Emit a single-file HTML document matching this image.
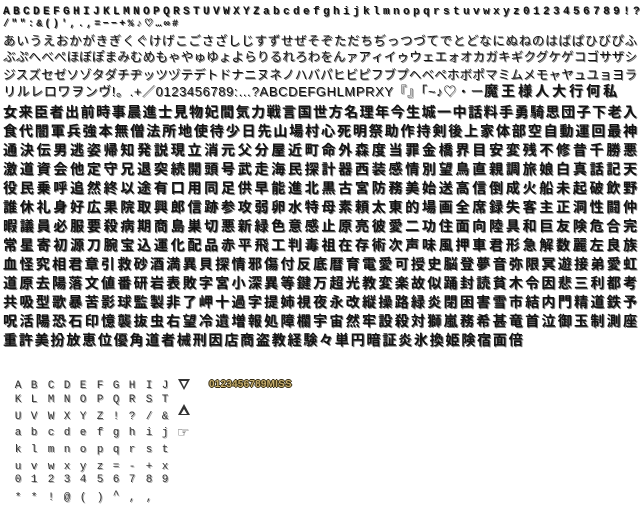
<!DOCTYPE html>
<html><head><meta charset="utf-8"><style>
html,body{margin:0;padding:0;background:#fff;width:640px;height:520px;overflow:hidden;position:relative}
.l{position:absolute;left:3px;width:634px;white-space:nowrap;color:#111;font-family:"Liberation Sans","Noto Sans CJK JP",sans-serif;text-shadow:1px 1px 0 #777;line-height:1}
.j{text-align:justify;text-align-last:justify}
.k{font-size:14px;font-weight:bold;height:15px}
.kn{font-size:12.5px;height:13px}
.m{font-family:"Liberation Mono",monospace;font-weight:bold}
.g{position:absolute;font-family:"Liberation Mono",monospace;font-size:11px;color:#333;text-shadow:1px 1px 0 #aaa;width:10px;text-align:center;line-height:1}
</style></head><body>
<div class="l m" style="top:7px;font-size:11px;letter-spacing:3.4px">ABCDEFGHIJKLMNOPQRSTUVWXYZabcdefghijklmnopqrstuvwxyz0123456789!?</div>
<div class="l m" style="top:20px;font-size:10px;letter-spacing:2.3px;width:auto">/"":&amp;()',.,=−−+%♪♡…∞#</div>
<div class="l kn j" style="top:35px">あいうえおかがきぎくぐけげこごさざしじすずせぜそぞただちぢっつづてでとどなにぬねのはばぱひびぴふ</div>
<div class="l kn j" style="top:51px">ぶぷへべぺほぼぽまみむめもゃやゅゆょよらりるれろわをんァアィイゥウェエォオカガキギクグケゲコゴサザシ</div>
<div class="l kn j" style="top:69px">ジスズセゼソゾタダチヂッツヅテデトドナニヌネノハバパヒビピフブプヘベペホボポマミムメモャヤュユョヨラ</div>
<div class="l kn" style="top:84px;font-size:13px;letter-spacing:0.6px">リルレロワヲンヴ!。.+／0123456789:…?ABCDEFGHLMPRXY『』「~♪♡・ー<span style="letter-spacing:3px;font-weight:bold;font-size:14px">魔王様人大行何私</span></div>
<div class="l k j" style="top:105px">女来臣者出前時事晨進士見物妃間気力戦言国世方名理年今生城一中話料手勇騎思団子下老入</div>
<div class="l k j" style="top:124px">食代闇軍兵強本無僧法所地使待少日先山場村心死明祭助作持剣後上家体部空自動運回最神</div>
<div class="l k j" style="top:143px">通決伝男逃姿帰知発説現立消元父分屋近町命外森度当罪金橋界目安変残不修昔千勝悪</div>
<div class="l k j" style="top:162px">激道資会他定守兄退突続開頭号武走海民探計器西装感情別望鳥直親調旅娘白真話記天</div>
<div class="l k j" style="top:181px">役民乗呼追然終以途有口用同足供早能進北黒古宮防務美始送高信倒成火船未起破飲野</div>
<div class="l k j" style="top:200px">誰休礼身好広果院取興郎信跡参攻弱卵水特母素頼太東的場画全席録失客主正洞性闘仲</div>
<div class="l k j" style="top:219px">暇議員必服要殺病期商島巣切悪新緑色意感止原亮彼愛二功住面向陸具和巨友険危合完</div>
<div class="l k j" style="top:238px">常星寄初源刀腕宝込運化配品赤平飛工判毒祖在存術次声味風押車君形急解数麗左良族</div>
<div class="l k j" style="top:257px">血怪究相君章引救砂酒満異貝探情邪傷付反底暦育電愛可授史脳登夢音弥限冥遊接弟愛虹</div>
<div class="l k j" style="top:276px">道原去陽落文値番研岩表敗字宮小深異等鍵万超光教変楽故似踊封読貧木令因悲三利都考</div>
<div class="l k j" style="top:295px">共吸型歌暴苦影球監製非了岬十過字提姉視夜永改縦操路緑炎閉困害雪市結内門精道鉄予</div>
<div class="l k j" style="top:314px">呪活陽恐石印憶襲抜虫右望冷遺増報処障欄宇宙然牢設殺対獅嵐務希甚竜首泣御玉制測座</div>
<div class="l k" style="top:333px;letter-spacing:1.8px;width:auto">重許美扮放恵位優角道者械刑因店商盗教経験々単円暗証炎氷換姫険宿面倍</div>

<div style="position:absolute;left:178px;top:379px;width:0;height:0;border-left:6px solid transparent;border-right:6px solid transparent;border-top:11px solid #333"></div>
<div style="position:absolute;left:181px;top:381px;width:0;height:0;border-left:3px solid transparent;border-right:3px solid transparent;border-top:6px solid #fff"></div>
<div style="position:absolute;left:178px;top:404px;width:0;height:0;border-left:6px solid transparent;border-right:6px solid transparent;border-bottom:11px solid #333"></div>
<div style="position:absolute;left:181px;top:409px;width:0;height:0;border-left:3px solid transparent;border-right:3px solid transparent;border-bottom:5px solid #fff"></div>
<div style="position:absolute;left:177px;top:426px;font-size:14px;color:#333;line-height:1;font-family:'DejaVu Sans',sans-serif">☞</div>
<div style="position:absolute;left:209px;top:380px;font-family:'Liberation Sans',sans-serif;font-weight:bold;font-size:10px;color:#c8b070;text-shadow:1px 0 0 #332a10,-1px 0 0 #332a10,0 1px 0 #332a10,0 -1px 0 #332a10;letter-spacing:0.2px;line-height:1">0123456789MISS</div>

<div class="g" style="left:13px;top:381px">A</div><div class="g" style="left:29px;top:381px">B</div><div class="g" style="left:46px;top:381px">C</div><div class="g" style="left:62px;top:381px">D</div><div class="g" style="left:78px;top:381px">E</div><div class="g" style="left:95px;top:381px">F</div><div class="g" style="left:111px;top:381px">G</div><div class="g" style="left:127px;top:381px">H</div><div class="g" style="left:144px;top:381px">I</div><div class="g" style="left:160px;top:381px">J</div>
<div class="g" style="left:13px;top:395px">K</div><div class="g" style="left:29px;top:395px">L</div><div class="g" style="left:46px;top:395px">M</div><div class="g" style="left:62px;top:395px">N</div><div class="g" style="left:78px;top:395px">O</div><div class="g" style="left:95px;top:395px">P</div><div class="g" style="left:111px;top:395px">Q</div><div class="g" style="left:127px;top:395px">R</div><div class="g" style="left:144px;top:395px">S</div><div class="g" style="left:160px;top:395px">T</div>
<div class="g" style="left:13px;top:412px">U</div><div class="g" style="left:29px;top:412px">V</div><div class="g" style="left:46px;top:412px">W</div><div class="g" style="left:62px;top:412px">X</div><div class="g" style="left:78px;top:412px">Y</div><div class="g" style="left:95px;top:412px">Z</div><div class="g" style="left:111px;top:412px">!</div><div class="g" style="left:127px;top:412px">?</div><div class="g" style="left:144px;top:412px">/</div><div class="g" style="left:160px;top:412px">&amp;</div>
<div class="g" style="left:13px;top:428px">a</div><div class="g" style="left:29px;top:428px">b</div><div class="g" style="left:46px;top:428px">c</div><div class="g" style="left:62px;top:428px">d</div><div class="g" style="left:78px;top:428px">e</div><div class="g" style="left:95px;top:428px">f</div><div class="g" style="left:111px;top:428px">g</div><div class="g" style="left:127px;top:428px">h</div><div class="g" style="left:144px;top:428px">i</div><div class="g" style="left:160px;top:428px">j</div>
<div class="g" style="left:13px;top:445px">k</div><div class="g" style="left:29px;top:445px">l</div><div class="g" style="left:46px;top:445px">m</div><div class="g" style="left:62px;top:445px">n</div><div class="g" style="left:78px;top:445px">o</div><div class="g" style="left:95px;top:445px">p</div><div class="g" style="left:111px;top:445px">q</div><div class="g" style="left:127px;top:445px">r</div><div class="g" style="left:144px;top:445px">s</div><div class="g" style="left:160px;top:445px">t</div>
<div class="g" style="left:13px;top:462px">u</div><div class="g" style="left:29px;top:462px">v</div><div class="g" style="left:46px;top:462px">w</div><div class="g" style="left:62px;top:462px">x</div><div class="g" style="left:78px;top:462px">y</div><div class="g" style="left:95px;top:462px">z</div><div class="g" style="left:111px;top:462px">=</div><div class="g" style="left:127px;top:462px">-</div><div class="g" style="left:144px;top:462px">+</div><div class="g" style="left:160px;top:462px">x</div>
<div class="g" style="left:13px;top:475px">0</div><div class="g" style="left:29px;top:475px">1</div><div class="g" style="left:46px;top:475px">2</div><div class="g" style="left:62px;top:475px">3</div><div class="g" style="left:78px;top:475px">4</div><div class="g" style="left:95px;top:475px">5</div><div class="g" style="left:111px;top:475px">6</div><div class="g" style="left:127px;top:475px">7</div><div class="g" style="left:144px;top:475px">8</div><div class="g" style="left:160px;top:475px">9</div>
<div class="g" style="left:13px;top:493px">*</div><div class="g" style="left:29px;top:493px">*</div><div class="g" style="left:46px;top:493px">!</div><div class="g" style="left:62px;top:493px">@</div><div class="g" style="left:78px;top:493px">(</div><div class="g" style="left:95px;top:493px">)</div><div class="g" style="left:111px;top:491px">^</div><div class="g" style="left:127px;top:493px">,</div><div class="g" style="left:144px;top:493px">,</div>
</body></html>
